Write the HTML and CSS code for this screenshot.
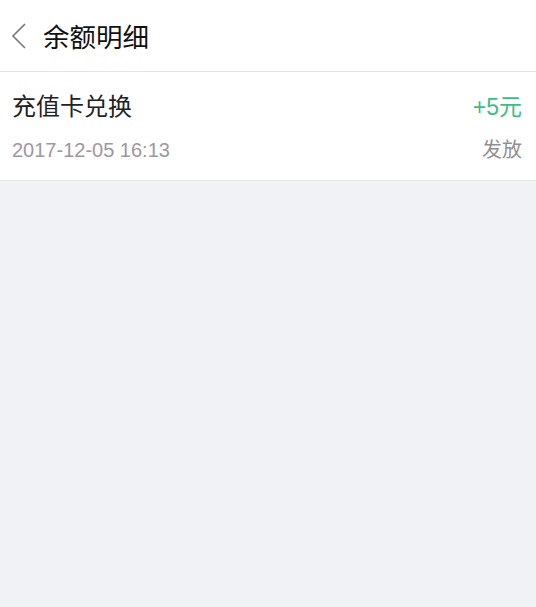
FILE: index.html
```html
<!DOCTYPE html>
<html>
<head>
    <meta charset="UTF-8">
    <title>余额明细</title>
    <link rel="stylesheet" href="styles.css">
</head>
<body>

<div class="m-head">
    <a href="javascript:;" class="u-back">
        <svg width="16" height="26" viewBox="0 0 16 26"><path d="M14 1 L2 13 L14 25" fill="none" stroke="#777" stroke-width="1.6"/></svg>
    </a>
    <h1 class="u-title">余额明细</h1>
</div>

<div class="m-list">
    <div class="u-item">
        <div class="u-line">
            <span class="u-name">充值卡兑换</span>
            <span class="u-amount">+5元</span>
        </div>
        <div class="u-line">
            <span class="u-date">2017-12-05 16:13</span>
            <span class="u-type">发放</span>
        </div>
    </div>
</div>

</body>
</html>
```

FILE: styles.css
```css
*{ margin: 0; padding: 0; text-decoration: none;}
body {background: #f0f2f5;font-family: "Liberation Sans", "Noto Sans CJK SC", sans-serif;width: 536px;height: 607px;}
.m-head {height: 71px;background: #fff;border-bottom: 1px solid #e4e4e6;display: flex;align-items: center;padding-left: 11px;}
.u-back {display: flex;align-items: center;width: 32px;}
.u-title {font-size: 26.5px;font-weight: normal;color: #111;}
.m-list {background: #fff;border-bottom: 1px solid #e4e4e8;}
.u-item {padding: 15px 14px 17px 12px;height: 76px;display: flex;flex-direction: column;justify-content: space-between;}
.u-line {display: flex;justify-content: space-between;align-items: baseline;}
.u-name {font-size: 24px;color: #222;}
.u-amount {font-size: 23px;color: #3dbd85;}
.u-date {font-size: 20px;color: #9d97a3;}
.u-type {font-size: 20px;color: #8f8f94;}
```
